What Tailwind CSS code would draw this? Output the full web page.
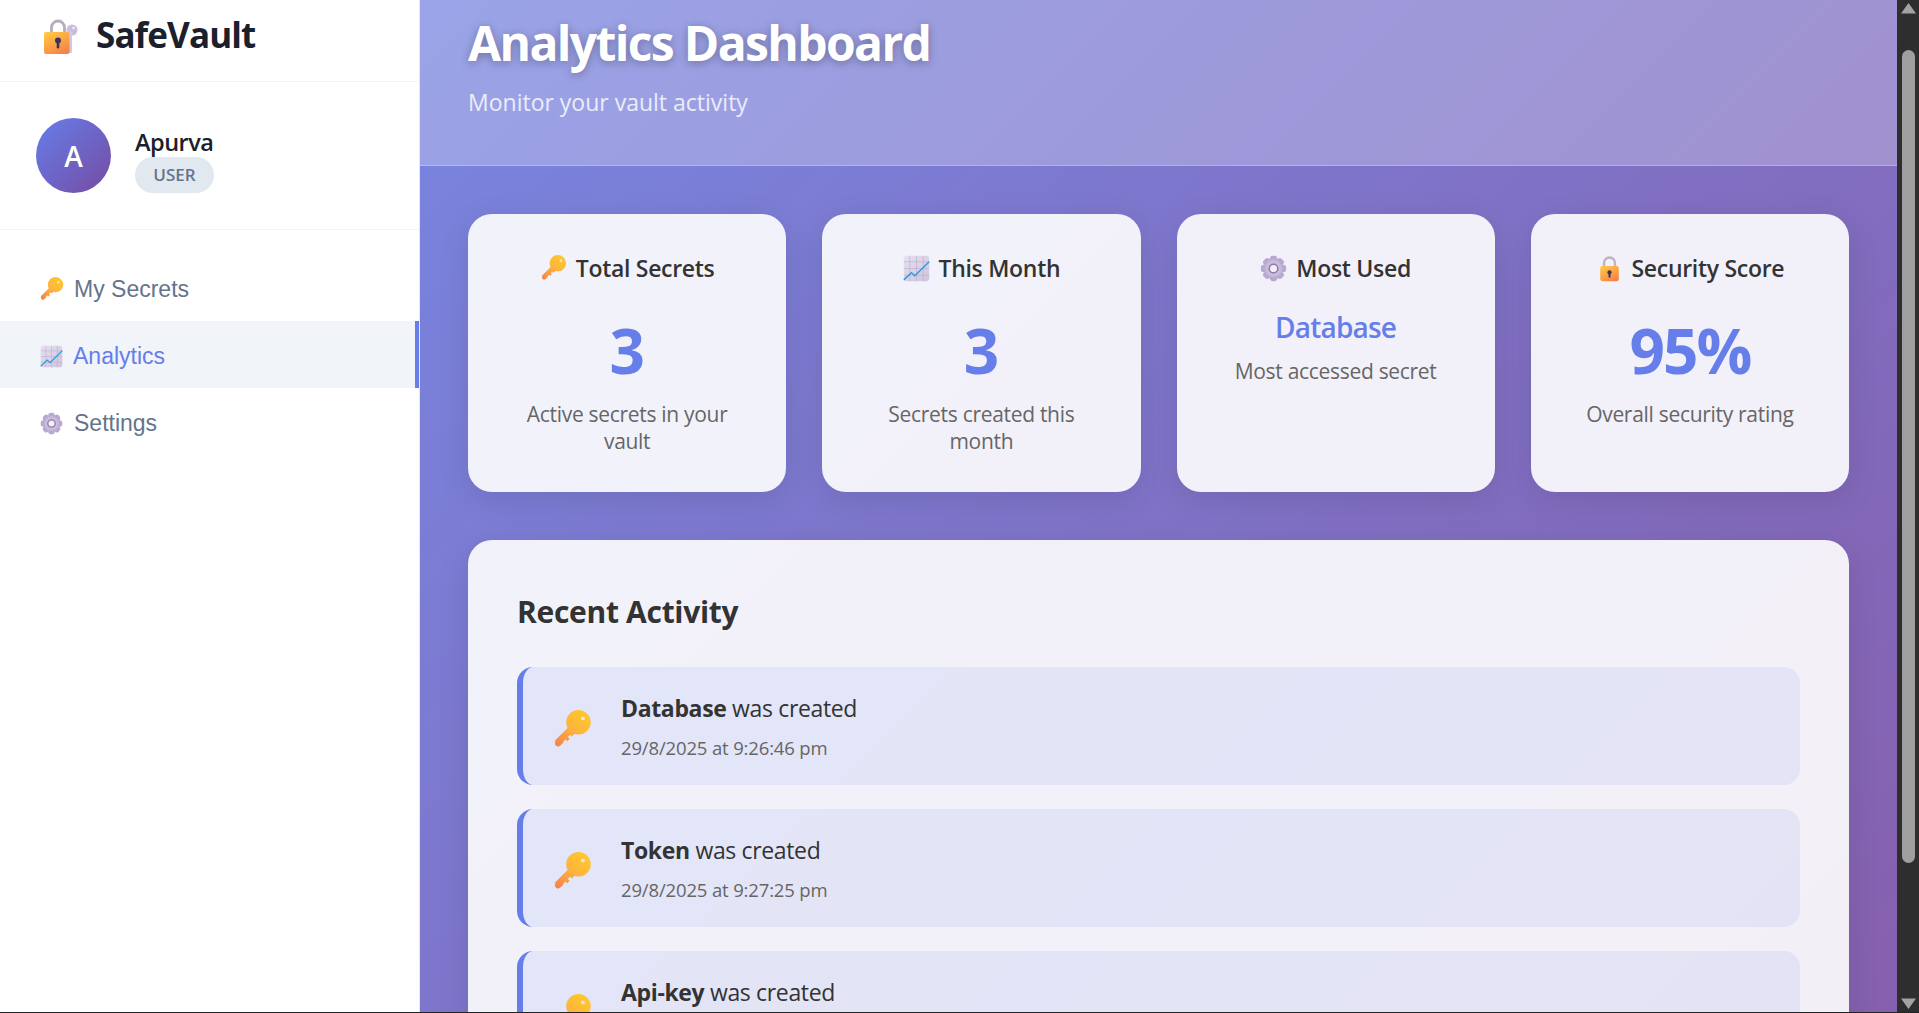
<!DOCTYPE html>
<html lang="en">
<head>
<meta charset="utf-8">
<title>SafeVault Analytics</title>
<script src="https://cdn.jsdelivr.net/npm/@tailwindcss/browser@4"></script>
</head>
<body class="overflow-hidden bg-white font-['Open_Sans',sans-serif]">
<svg width="0" height="0" class="absolute">
  <defs>
    <linearGradient id="gold" x1="0.9" y1="0" x2="0.1" y2="1"><stop offset="0" stop-color="#ffc92c"/><stop offset="0.5" stop-color="#fdb53c"/><stop offset="1" stop-color="#f6824c"/></linearGradient>
    <linearGradient id="lockbody" x1="0.2" y1="0" x2="0.8" y2="1"><stop offset="0" stop-color="#ffc743"/><stop offset="1" stop-color="#f77f48"/></linearGradient>
    <linearGradient id="chartbg" x1="0" y1="0" x2="1" y2="1"><stop offset="0" stop-color="#e6e1ee"/><stop offset="1" stop-color="#cfc4e0"/></linearGradient>
    <symbol id="key" viewBox="1 0 31 31">
      <path d="M31 9.500a9.500 9.500 0 1 1-19 0 9.500 9.500 0 1 1 19 0ZM2.600 24.400 15 12l5 5-3.600 3.600-1.400-1.400-1.700 1.700 1.400 1.400-1.900 1.900-1.400-1.400-1.700 1.700.4.400-2.600 2.600c-1 1-2.600 1-3.500.1s-1-2.700 0-3.700Z" fill="url(#gold)"/>
      <circle cx="25" cy="6.500" r="1.500" fill="#f6e9c9"/>
    </symbol>
    <symbol id="chart" viewBox="0 0 32 32">
      <rect x="1" y="1" width="30" height="30" rx="3.500" fill="url(#chartbg)"/>
      <path d="M8 1v30M16 1v30M24 1v30M1 8h30M1 16h30M1 24h30" stroke="#bdb0d0" stroke-width=".8" fill="none"/>
      <path d="M1 29.500 10 21l4 3.500L31 8" stroke="#2f9bdc" stroke-width="1.700" fill="none"/>
    </symbol>
    <symbol id="gear" viewBox="0 0 32 32">
      <g fill="#b9a9d0">
        <rect x="11.500" y="1" width="9" height="30" rx="3.500"/>
        <rect x="11.500" y="1" width="9" height="30" rx="3.500" transform="rotate(45 16 16)"/>
        <rect x="11.500" y="1" width="9" height="30" rx="3.500" transform="rotate(90 16 16)"/>
        <rect x="11.500" y="1" width="9" height="30" rx="3.500" transform="rotate(135 16 16)"/>
      </g>
      <circle cx="16" cy="16" r="10" fill="#c9bcdb"/>
      <circle cx="16" cy="16" r="6" fill="#8d7da6"/>
      <circle cx="16" cy="16" r="4.200" fill="#f1eff6"/>
    </symbol>
    <symbol id="lock" viewBox="0 0 32 32">
      <path d="M9.500 15V9.500a6.500 6.500 0 0 1 13 0V15" fill="none" stroke="#bcb4c6" stroke-width="2.800"/>
      <rect x="5" y="13" width="22" height="18" rx="2.500" fill="url(#lockbody)"/>
      <circle cx="16" cy="20.500" r="2.500" fill="#3b3358"/>
      <rect x="14.800" y="21" width="2.400" height="6" rx="1.200" fill="#3b3358"/>
    </symbol>
    <symbol id="lockkey" viewBox="0 0 34 35">
      <path d="M7.500 15V8.500a6.500 6.500 0 0 1 13 0V15" fill="none" stroke="#b5adbd" stroke-width="2.800"/>
      <circle cx="28" cy="11" r="5.500" fill="#c9bcdd"/>
      <rect x="22" y="12" width="6" height="22" rx="1.500" fill="#d3c8e3"/>
      <circle cx="29.500" cy="9" r="1.300" fill="#f3eff8"/>
      <rect x="0" y="13" width="25.500" height="22" rx="2" fill="url(#lockbody)"/>
      <circle cx="14" cy="21.500" r="3" fill="#3b3358"/>
      <rect x="12.700" y="22.500" width="2.600" height="7" rx="1.300" fill="#3b3358"/>
    </symbol>
  </defs>
</svg>

<div class="flex h-screen flex-col overflow-hidden">
  <div class="flex min-h-0 flex-1">
    <aside class="flex w-[420px] shrink-0 flex-col border-r border-[#e2e8f0] bg-white">
      <div class="flex h-[82px] shrink-0 items-center gap-[18px] border-b border-[#f1f5f9] pb-[9px] pl-[44px]">
        <svg class="h-[35px] w-[34px]"><use href="#lockkey"/></svg>
        <span class="mb-[3px] text-[35px] leading-none font-bold tracking-[-0.9px] text-[#1a202c]">SafeVault</span>
      </div>
      <div class="flex h-[148px] shrink-0 items-center gap-[24px] border-b border-[#f1f5f9] pt-[8px] pl-[36px]">
        <div class="-mt-[8px] flex size-[75px] items-center justify-center rounded-full bg-[linear-gradient(135deg,#667eea,#764ba2)] text-[28px] font-semibold text-white">A</div>
        <div class="flex flex-col items-start">
          <span class="text-[23.5px] leading-[30px] font-semibold tracking-[-0.5px] text-[#1a202c]">Apurva</span>
          <span class="flex h-[36px] w-[79px] items-center justify-center rounded-full bg-[#e2e8f0] text-[17px] font-semibold text-[#64748b]">USER</span>
        </div>
      </div>
      <nav class="flex flex-col pt-[24px] font-['Liberation_Sans',sans-serif] text-[23px]">
        <a class="flex h-[67px] items-center gap-[10px] pt-[3px] pl-[39px] text-[#64748b]"><svg class="size-[25px]"><use href="#key"/></svg>My Secrets</a>
        <a class="flex h-[67px] items-center gap-[10px] border-r-4 border-[#667eea] bg-[#f1f4f9] pt-[3px] pl-[40px] text-[#667eea]"><svg class="size-[23px]"><use href="#chart"/></svg>Analytics</a>
        <a class="flex h-[67px] items-center gap-[11px] pt-[3px] pl-[40px] text-[#64748b]"><svg class="size-[23px]"><use href="#gear"/></svg>Settings</a>
      </nav>
    </aside>

    <main class="flex min-w-0 flex-1 flex-col overflow-hidden bg-[linear-gradient(135deg,#7885e0,#8660ae)]">
      <header class="h-[166px] shrink-0 border-b border-white/25 bg-white/25 pt-[14px] pl-[48px]">
        <h1 class="text-[48px] leading-[58px] font-bold tracking-[-1.63px] text-white [text-shadow:0_2px_10px_rgba(0,0,0,0.3)]">Analytics Dashboard</h1>
        <p class="mt-[15px] text-[23px] leading-[30px] text-white/80">Monitor your vault activity</p>
      </header>

      <section class="grid shrink-0 grid-cols-4 gap-[36px] px-[48px] pt-[48px]">
        <div class="h-[278px] rounded-[24px] bg-white/90 px-[40px] pt-[39px] text-center shadow-[0_8px_32px_rgba(0,0,0,0.1)]">
          <h3 class="flex h-[30px] items-center justify-center gap-[9px] text-[23px] font-semibold tracking-[-0.3px] text-[#333]"><svg class="size-[27px]"><use href="#key"/></svg>Total Secrets</h3>
          <div class="mt-[25px] mb-[9px] text-[62px] leading-[84px] font-bold text-[#667eea]">3</div>
          <p class="text-[21px] leading-[27px] tracking-[-0.3px] text-[#666]">Active secrets in your vault</p>
        </div>
        <div class="h-[278px] rounded-[24px] bg-white/90 px-[40px] pt-[39px] text-center shadow-[0_8px_32px_rgba(0,0,0,0.1)]">
          <h3 class="flex h-[30px] items-center justify-center gap-[9px] text-[23px] font-semibold tracking-[-0.3px] text-[#333]"><svg class="size-[27px]"><use href="#chart"/></svg>This Month</h3>
          <div class="mt-[25px] mb-[9px] text-[62px] leading-[84px] font-bold text-[#667eea]">3</div>
          <p class="text-[21px] leading-[27px] tracking-[-0.3px] text-[#666]">Secrets created this month</p>
        </div>
        <div class="h-[278px] rounded-[24px] bg-white/90 px-[40px] pt-[39px] text-center shadow-[0_8px_32px_rgba(0,0,0,0.1)]">
          <h3 class="flex h-[30px] items-center justify-center gap-[9px] text-[23px] font-semibold tracking-[-0.3px] text-[#333]"><svg class="size-[27px]"><use href="#gear"/></svg>Most Used</h3>
          <div class="mt-[24px] mb-[11px] text-[28px] leading-[40px] font-semibold tracking-[-0.8px] text-[#667eea]">Database</div>
          <p class="text-[21px] leading-[27px] tracking-[-0.3px] text-[#666]">Most accessed secret</p>
        </div>
        <div class="h-[278px] rounded-[24px] bg-white/90 px-[40px] pt-[39px] text-center shadow-[0_8px_32px_rgba(0,0,0,0.1)]">
          <h3 class="flex h-[30px] items-center justify-center gap-[9px] text-[23px] font-semibold tracking-[-0.3px] text-[#333]"><svg class="size-[27px]"><use href="#lock"/></svg>Security Score</h3>
          <div class="mt-[25px] mb-[9px] text-[62px] leading-[84px] font-bold tracking-[-2px] text-[#667eea]">95%</div>
          <p class="text-[21px] leading-[27px] tracking-[-0.3px] text-[#666]">Overall security rating</p>
        </div>
      </section>

      <section class="mx-[48px] mt-[48px] shrink-0 rounded-[24px] bg-white/90 px-[49px] py-[50px] shadow-[0_8px_32px_rgba(0,0,0,0.1)]">
        <h2 class="mb-[33px] text-[30px] leading-[44px] font-bold tracking-[-0.3px] text-[#333]">Recent Activity</h2>
        <div class="flex flex-col gap-[24px]">
          <div class="flex h-[118px] items-center gap-[29px] rounded-[16px] border-l-[6px] border-[#667eea] bg-[#667eea]/10 pl-[29px]">
            <svg class="mt-[7px] size-[40px]"><use href="#key"/></svg>
            <div class="-mt-[1px]">
              <p class="text-[23px] leading-[36px] tracking-[-0.35px] text-[#333]"><strong class="font-bold">Database</strong> was created</p>
              <p class="mt-[9px] text-[18.5px] leading-[26px] tracking-[-0.15px] text-[#666]">29/8/2025 at 9:26:46 pm</p>
            </div>
          </div>
          <div class="flex h-[118px] items-center gap-[29px] rounded-[16px] border-l-[6px] border-[#667eea] bg-[#667eea]/10 pl-[29px]">
            <svg class="mt-[7px] size-[40px]"><use href="#key"/></svg>
            <div class="-mt-[1px]">
              <p class="text-[23px] leading-[36px] tracking-[-0.35px] text-[#333]"><strong class="font-bold">Token</strong> was created</p>
              <p class="mt-[9px] text-[18.5px] leading-[26px] tracking-[-0.15px] text-[#666]">29/8/2025 at 9:27:25 pm</p>
            </div>
          </div>
          <div class="flex h-[118px] items-center gap-[29px] rounded-[16px] border-l-[6px] border-[#667eea] bg-[#667eea]/10 pl-[29px]">
            <svg class="mt-[7px] size-[40px]"><use href="#key"/></svg>
            <div class="-mt-[1px]">
              <p class="text-[23px] leading-[36px] tracking-[-0.35px] text-[#333]"><strong class="font-bold">Api-key</strong> was created</p>
              <div class="mt-[9px] h-[26px]"></div>
            </div>
          </div>
        </div>
      </section>
    </main>

    <div class="flex w-[22px] shrink-0 flex-col items-center bg-[#2e2e2e] py-[3px]">
      <svg class="h-[11px] w-[15px] shrink-0" viewBox="0 0 15 11"><path d="M7.500 0 15 10.500H0Z" fill="#a3a3a3"/></svg>
      <div class="mt-[36px] h-[813px] w-[13px] shrink-0 rounded-full bg-[#9f9f9f]"></div>
      <div class="flex-1"></div>
      <svg class="h-[11px] w-[15px] shrink-0" viewBox="0 0 15 11"><path d="M0 .5H15L7.500 11Z" fill="#a3a3a3"/></svg>
    </div>
  </div>
  <div class="h-px shrink-0 bg-[#1f2424]"></div>
</div>
</body>
</html>
